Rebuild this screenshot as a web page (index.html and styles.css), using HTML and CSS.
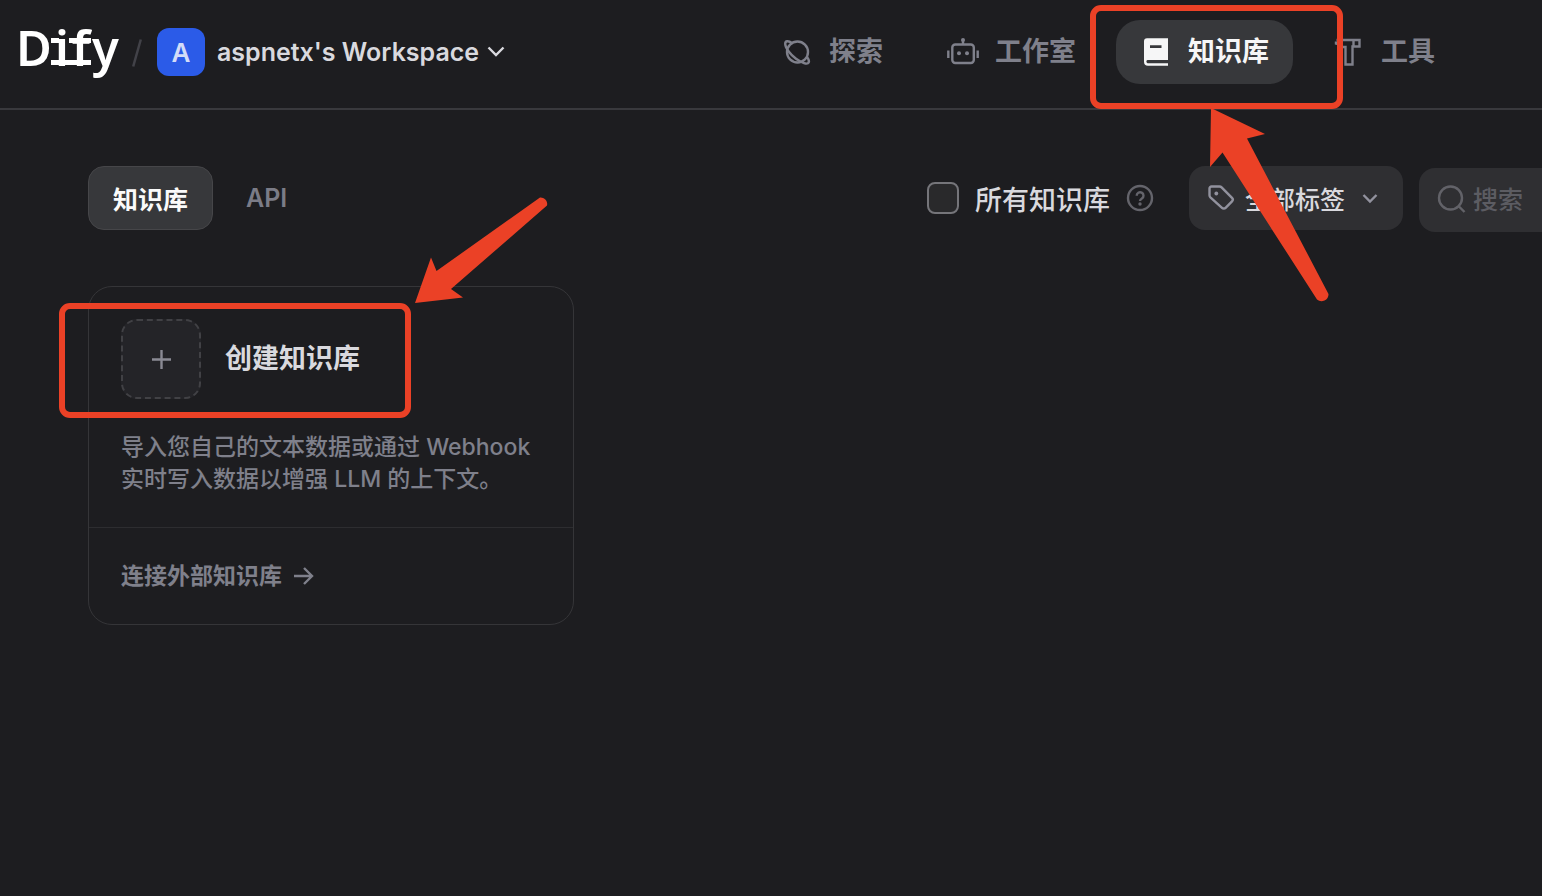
FILE: index.html
```
<!DOCTYPE html>
<html lang="zh-CN">
<head>
<meta charset="utf-8">
<title>知识库 - Dify</title>
<link rel="stylesheet" href="styles.css">
</head>
<body>
<header class="header">
  <div class="brand">
    <a class="logo" href="#" aria-label="Dify"><span class="logo-d">D</span><span class="logo-if"><span class="logo-i">i</span><span class="logo-f">f</span></span><span class="logo-y">y</span></a>
    <svg class="slash" viewBox="0 0 12 32" aria-hidden="true"><path d="M9.800 1.500 2.200 28.500"/></svg>
    <button class="workspace" type="button">
      <span class="avatar">A</span>
      <span class="workspace-name">aspnetx's Workspace</span>
      <svg class="chevron" viewBox="0 0 18 18" aria-hidden="true"><path d="M1.500 4.500 9 12l7.500-7.500"/></svg>
    </button>
  </div>
  <nav class="nav">
    <a class="nav-item" href="#">
      <svg class="icon" viewBox="0 0 32 32" aria-hidden="true"><circle cx="16.500" cy="16" r="10.500"/><path d="M11 7C7.500 4.500 4 4.500 4.200 8c.2 4 5 10.500 10.800 14.800 5.500 4 11.500 6.200 12.700 3.700.7-1.500-.1-3.500-1.700-5.500"/></svg>
      <span>探索</span>
    </a>
    <a class="nav-item" href="#">
      <svg class="icon" viewBox="0 0 32 32" aria-hidden="true"><rect x="5.300" y="8.500" width="21.500" height="18.500" rx="3"/><path d="M16 8V4M1.300 14.500V22M30.700 14.500V22"/><circle class="solid" cx="16" cy="4" r="2"/><circle class="solid" cx="12" cy="17.300" r="2"/><circle class="solid" cx="20" cy="17.300" r="2"/></svg>
      <span>工作室</span>
    </a>
    <div class="nav-marked">
      <a class="nav-item nav-active" href="#" aria-current="page">
        <svg class="icon" viewBox="0 0 32 32" aria-hidden="true"><path class="solid" fill-rule="evenodd" d="M7 2.300H28V24H7.500A1.700 1.700 0 0 0 7.500 27.200H28V29.700H8A4 4 0 0 1 4 25.700V5.300A3 3 0 0 1 7 2.300ZM10 9.200V12H21.500V9.200Z"/></svg>
        <span>知识库</span>
      </a>
      <div class="mark mark-nav"></div>
      <svg class="arrow arrow-nav" viewBox="0 0 122 198" aria-hidden="true"><path d="M3 1 57 27 39 31.500 120.500 187A7 7 0 0 1 109 192.500L14.500 45.500 2 60Z"/></svg>
    </div>
    <a class="nav-item" href="#">
      <svg class="icon" viewBox="0 0 32 32" aria-hidden="true"><path d="M3.500 4H26.500V10.500H19.500V28.500H12.500V11H8.500C7.500 8.500 6 7.700 3 7.500V5.500M20.500 4V10.500"/></svg>
      <span>工具</span>
    </a>
  </nav>
</header>
<main class="main">
  <div class="toolbar">
    <div class="tabs">
      <button class="tab tab-active" type="button">知识库</button>
      <button class="tab" type="button">API</button>
    </div>
    <div class="filters">
      <label class="all-label"><input class="check" type="checkbox"><span>所有知识库</span></label>
      <svg class="help" viewBox="0 0 28 28" role="img" aria-label="帮助"><circle cx="14" cy="14" r="12"/><path d="M10.700 11.700a3.400 3.400 0 1 1 5.200 2.800c-1.300.8-1.900 1.200-1.900 2.500"/><circle class="dot" cx="14" cy="20" r="1.700"/></svg>
      <button class="tag-filter" type="button">
        <svg class="tag-icon" viewBox="0 0 28 28" aria-hidden="true"><path d="M2.500 4.500A2 2 0 0 1 4.500 2.500H12.500A3 3 0 0 1 14.600 3.400L25 13.800A2.500 2.500 0 0 1 25 17.300L18.600 23.800A2.500 2.500 0 0 1 15 23.800L3.400 13.400A3 3 0 0 1 2.500 11.300Z"/><circle class="solid" cx="9.300" cy="9.500" r="1.900"/></svg>
        <span>全部标签</span>
        <svg class="tag-chevron" viewBox="0 0 16 16" aria-hidden="true"><path d="M1.500 5 8 11.500 14.500 5"/></svg>
      </button>
    </div>
    <label class="search">
      <svg class="search-icon" viewBox="0 0 30 30" aria-hidden="true"><circle cx="13.500" cy="13" r="11.500"/><path d="m21.500 21 6 6"/></svg>
      <input class="search-input" type="text" placeholder="搜索" aria-label="搜索">
    </label>
  </div>
  <section class="card">
    <a class="create" href="#">
      <span class="create-head">
        <span class="plus"><svg viewBox="0 0 20 20" aria-hidden="true"><path d="M10.500 1v19M1 10.500h19"/></svg></span>
        <span class="create-title">创建知识库</span>
      </span>
      <span class="desc">导入您自己的文本数据或通过 Webhook 实时写入数据以增强 LLM 的上下文。</span>
    </a>
    <a class="connect" href="#"><span>连接外部知识库</span><svg viewBox="0 0 20 20" aria-hidden="true"><path d="M0 10h18M10 2l8 8-8 8"/></svg></a>
    <div class="mark mark-card"></div>
    <svg class="arrow arrow-card" viewBox="0 0 136 110" aria-hidden="true"><path d="M1 107 17 61.500 22.500 75 126 1.500A6.500 6.500 0 0 1 133 9.500L37 93 49 101.500Z"/></svg>
  </section>
</main>
</body>
</html>
```
FILE: styles.css
```
* { box-sizing: border-box; }
body {
  margin: 0;
  min-height: 100vh;
  background: #1d1d20;
  color: #d9d9de;
  font-family: Inter, "Noto Sans CJK SC", sans-serif;
  overflow-x: hidden;
}
a { color: inherit; text-decoration: none; }
button { border: 0; padding: 0; background: none; color: inherit; font: inherit; cursor: pointer; }
svg { flex: none; fill: none; stroke: currentColor; stroke-width: 2.4; }
.solid { fill: currentColor; stroke: none; }

.header {
  display: flex;
  justify-content: space-between;
  align-items: center;
  height: 110px;
  padding: 0 83px 4px 16px;
  border-bottom: 2px solid #39393d;
}
.brand { display: flex; align-items: center; }
.logo {
  display: flex;
  height: 58px;
  width: 100px;
  color: #fff;
  font-family: "Noto Sans", sans-serif;
  font-size: 49px;
  font-weight: 600;
  line-height: 48px;
}
.logo-if { position: relative; display: flex; margin-left: -1px; }
.logo-if::before, .logo-if::after, .logo-f::before {
  content: "";
  position: absolute;
  left: 0;
  height: 5px;
  background: currentColor;
}
.logo-if::before { top: 15px; width: 8px; }
.logo-if::after { top: 37px; width: 40px; }
.logo-i { margin-left: 4px; }
.logo-f { margin-left: 3px; }
.logo-f::before { top: 15px; left: 18px; width: 22px; }
.logo-y { margin-left: 2px; }
.slash { width: 12px; height: 32px; margin: 4px 14px 0 15px; color: #424248; stroke-width: 2.500; }
.workspace { display: flex; align-items: center; }
.avatar {
  display: grid;
  place-items: center;
  width: 48px;
  height: 48px;
  margin-right: 12px;
  border-radius: 12px;
  background: #2b5be8;
  color: #d3dcf8;
  font-size: 26px;
  font-weight: 600;
}
.workspace-name { font-size: 25px; font-weight: 600; }
.chevron { width: 18px; height: 18px; margin-left: 8px; }
.nav { display: flex; gap: 16px; }
.nav-item {
  display: flex;
  align-items: center;
  gap: 16px;
  height: 64px;
  padding: 0 24px;
  border-radius: 24px;
  color: #7f808b;
  font-size: 27px;
  font-weight: 700;
  line-height: 32px;
  white-space: nowrap;
}
.icon { width: 32px; height: 32px; }
.nav-active { background: #37383b; color: #f6f6f7; }
.nav-marked { position: relative; }
.mark { position: absolute; z-index: 2; border: 6px solid #eb4126; border-radius: 11px; pointer-events: none; }
.mark-nav { top: -15px; left: -26px; width: 253px; height: 104px; }
.arrow { position: absolute; z-index: 3; fill: #eb4126; stroke: none; pointer-events: none; }
.arrow-nav { top: 87px; left: 92px; width: 122px; height: 198px; }

.main { padding: 56px 0 56px 88px; }
.toolbar { display: flex; height: 66px; }
.tabs { display: flex; gap: 8px; height: 64px; }
.tab {
  padding: 0 24px;
  border: 1px solid transparent;
  border-radius: 16px;
  color: #7b7c87;
  font-size: 25px;
  font-weight: 600;
}
.tab-active { border-color: #464649; background: #37383b; color: #fafafa; font-weight: 700; }
.filters { display: flex; align-items: center; height: 64px; margin-left: auto; }
.all-label { display: flex; align-items: center; gap: 16px; font-size: 27px; font-weight: 500; }
.check {
  appearance: none;
  width: 32px;
  height: 32px;
  margin: 0;
  border: 2px solid #75757a;
  border-radius: 8px;
  background: #29292b;
}
.help { width: 28px; height: 28px; margin: 0 35px 0 16px; color: #64646b; }
.help .dot { fill: currentColor; stroke: none; }
.tag-filter {
  display: flex;
  align-items: center;
  height: 64px;
  padding: 0 25px 0 18px;
  border-radius: 16px;
  background: #2f2f32;
  font-size: 25px;
  font-weight: 500;
}
.tag-icon { width: 28px; height: 28px; margin-right: 10px; color: #92929e; }
.tag-chevron { width: 16px; height: 16px; margin-left: 17px; color: #92929e; }
.search {
  display: flex;
  align-items: center;
  align-self: flex-end;
  gap: 6px;
  width: 123px;
  height: 64px;
  margin-left: 16px;
  padding-left: 18px;
  border-radius: 16px 0 0 16px;
  background: #2f2f32;
}
.search-icon { width: 30px; height: 30px; color: #626268; }
.search-input {
  flex: 1;
  min-width: 0;
  padding: 0;
  border: 0;
  outline: 0;
  background: none;
  color: #d9d9de;
  font: 500 25px Inter, "Noto Sans CJK SC", sans-serif;
}
.search-input::placeholder { color: #5c5c62; }

.card {
  position: relative;
  max-width: 486px;
  margin-top: 54px;
  border: 1px solid #353538;
  border-radius: 24px;
}
.create { display: block; padding: 32px; border-bottom: 1px solid #2d2d30; }
.create-head { display: flex; align-items: center; gap: 24px; }
.plus {
  display: grid;
  place-items: center;
  width: 80px;
  height: 80px;
  border: 2px dashed #414145;
  border-radius: 16px;
  background: #242428;
  color: #8a8a94;
}
.plus svg { width: 20px; height: 20px; overflow: visible; }
.create-title { font-size: 27px; font-weight: 700; line-height: 32px; }
.desc { display: block; margin-top: 32px; color: #7f808b; font-size: 23px; font-weight: 500; line-height: 32px; }
.connect {
  display: flex;
  align-items: center;
  gap: 12px;
  height: 96px;
  padding: 0 32px;
  color: #7f808b;
  font-size: 23px;
  font-weight: 700;
  line-height: 28px;
}
.connect svg { width: 20px; height: 20px; }
.mark-card { top: 16px; left: -30px; width: 352px; height: 115px; }
.arrow-card { top: -91px; left: 325px; width: 136px; height: 110px; }
```
